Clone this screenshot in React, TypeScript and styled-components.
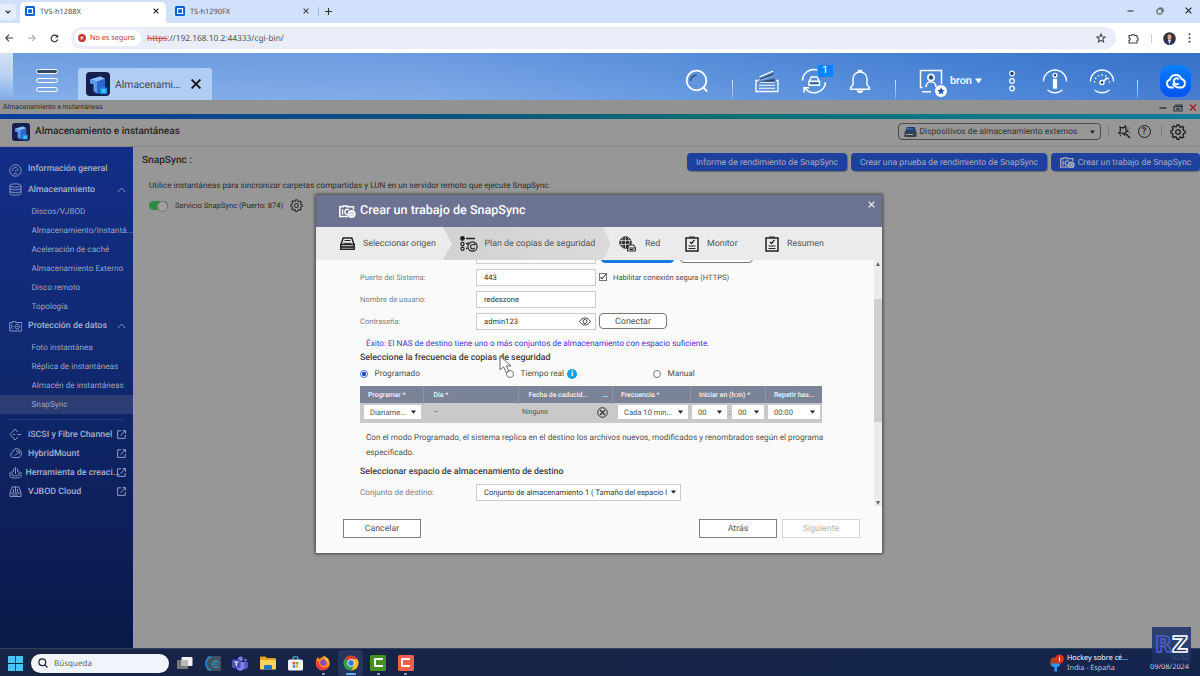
import React from "react";
import styled, { createGlobalStyle, css } from "styled-components";

const schedule = {
  paragraph:
    "Con el modo Programado, el sistema replica en el destino los archivos nuevos, modificados y renombrados según el programa",
};

const storageItems = [
  "Discos/VJBOD",
  "Almacenamiento/Instantá...",
  "Aceleración de caché",
  "Almacenamiento Externo",
  "Disco remoto",
  "Topología",
];

const protectionItems = [
  "Foto instantánea",
  "Réplica de instantáneas",
  "Almacén de instantáneas",
  "SnapSync",
];

export default function App() {
  return (
    <Screen>
      <GlobalStyle />
      <Browser />
      <Desktop />
      <StorageWindow />
      <Taskbar />
      <Watermark>
        <LetterR>R</LetterR>
        <LetterZ>Z</LetterZ>
      </Watermark>
    </Screen>
  );
}

const Browser = () => (
  <>
    <TabStrip>
      <TabSearch>
        <svg width="6" height="4" viewBox="0 0 6 4">
          <path d="M.7.7 3 3 5.3.7" fill="none" stroke="#222" strokeWidth="1.2" />
        </svg>
      </TabSearch>
      <BrowserTab $active>
        <Favicon />
        <TabTitle>TVS-h1288X</TabTitle>
        <Cross size={6} color="#222" />
      </BrowserTab>
      <BrowserTab>
        <Favicon />
        <TabTitle>TS-h1290FX</TabTitle>
        <Cross size={6} color="#444" />
      </BrowserTab>
      <TabDivider />
      <svg width="7" height="7" viewBox="0 0 7 7">
        <path d="M3.5 0v7M0 3.5h7" stroke="#333" strokeWidth="1.1" />
      </svg>
      <WindowButtons>
        <svg width="7" height="8" viewBox="0 0 7 8">
          <path d="M.5 4h6" stroke="#222" />
        </svg>
        <svg width="8" height="8" viewBox="0 0 8 8" fill="none" stroke="#333" strokeWidth=".9">
          <rect x="1" y="2" width="5" height="5" rx="1.2" />
          <path d="M3 1h2.5A1.7 1.7 0 0 1 7.200 2.700V5" />
        </svg>
        <Cross size={7} color="#222" />
      </WindowButtons>
    </TabStrip>
    <AddressRow>
      <NavButtons>
        <svg width="8" height="8" viewBox="0 0 8 8" fill="none" stroke="#444" strokeWidth="1.1">
          <path d="M8 4H1M4 .7.8 4 4 7.300" />
        </svg>
        <svg width="8" height="8" viewBox="0 0 8 8" fill="none" stroke="#999" strokeWidth="1">
          <path d="M0 4h7M4 .7 7.200 4 4 7.300" />
        </svg>
        <svg width="9" height="9" viewBox="0 0 9 9" fill="none" stroke="#333" strokeWidth="1.2">
          <path d="M7.600 5.500A3.300 3.300 0 1 1 7 2.300" />
          <path d="M8.200.4v3.200H5z" fill="#333" stroke="none" />
        </svg>
      </NavButtons>
      <Omnibox>
        <SecurityChip>
          <svg width="8" height="8" viewBox="0 0 8 8">
            <circle cx="4" cy="4" r="3.900" fill="#c5332c" />
            <path d="m2.600 2.600 2.800 2.800m0-2.800L2.600 5.400" stroke="#fff" strokeWidth="1.1" />
          </svg>
          No es seguro
        </SecurityChip>
        <Url>
          <s>https</s>://192.168.10.2:44333/cgi-bin/
        </Url>
        <svg width="10" height="10" viewBox="0 0 24 24" fill="none" stroke="#444" strokeWidth="2.500">
          <path d="m12 2.500 2.900 6.400 7 .7-5.200 4.700 1.500 6.900L12 17.600l-6.200 3.600 1.500-6.900L2.100 9.600l7-.7z" />
        </svg>
      </Omnibox>
      <BrowserActions>
        <svg width="11" height="11" viewBox="0 0 11 11" fill="none" stroke="#444" strokeWidth="1.1">
          <path d="M1 2.500h2.700a1.300 1.300 0 0 1 2.600 0H9v2.300a1.300 1.300 0 0 1 0 2.600V10H1V7.400a1.200 1.200 0 0 0 0-2.500z" />
        </svg>
        <ToolDivider />
        <svg width="13" height="13" viewBox="0 0 13 13">
          <circle cx="6.500" cy="6.500" r="6.300" fill="#3b3036" />
          <path d="M1 9.500C3 7 4.500 8 5 7.500l3 0c.5.5 3 0 4 2A6.300 6.300 0 0 1 1 9.500" fill="#26355c" />
          <path d="m5 7.500 1.500 5 1.500-5z" fill="#eef" />
          <ellipse cx="6.500" cy="5" rx="2" ry="2.700" fill="#d8a68c" />
        </svg>
        <svg width="3" height="10" viewBox="0 0 3 10" fill="#444">
          <circle cx="1.500" cy="1.300" r="1" />
          <circle cx="1.500" cy="5" r="1" />
          <circle cx="1.500" cy="8.700" r="1" />
        </svg>
      </BrowserActions>
    </AddressRow>
  </>
);

const Desktop = () => (
  <DesktopBar>
    <DesktopEdge />
    <MenuButton>
      <i />
      <i />
      <i />
    </MenuButton>
    <DesktopTab>
      <StorageLogo size={24} />
      <span>Almacenami…</span>
      <Cross size={10} color="#111" weight={1.900} />
    </DesktopTab>
    <DesktopTools>
      <Slot $w={44}>
        <svg width="24" height="24" viewBox="0 0 24 24" fill="none" stroke="#fff" strokeWidth="1.700">
          <circle cx="11.500" cy="11.500" r="9.800" />
          <path d="m18.500 18.800 3.800 3.800" strokeWidth="2" />
          <path d="M5.500 12a6 6 0 0 1 6-6" stroke="#26384f" strokeWidth="1.100" />
        </svg>
      </Slot>
      <Slot $w={26}><BarDivider /></Slot>
      <Slot $w={44}>
        <svg width="24" height="24" viewBox="0 0 24 24" fill="none" stroke="#fff" strokeWidth="1.300">
          <path d="M3.500 11.500H1v11h22v-11h-2" />
          <path d="m4.500 8 13.500-6M4.500 10.800 18.500 6M5 13.200h14.500" />
          <path d="m5 9.600 13.500-5.400v2L5 11zM5 12.300l14.500-2.600v3H5z" fill="#2c4668" stroke="none" />
          <path d="M4 16.200h16M4 19.300h16" strokeWidth="1.100" />
        </svg>
      </Slot>
      <Slot $w={49}>
        <Badged>
          <svg width="26" height="26" viewBox="0 0 26 26" fill="none" stroke="#fff" strokeWidth="1.500">
            <path d="M1.500 12.500A11.300 11.300 0 0 1 16 2M24.500 14A11.500 11.500 0 0 1 4 20.300M3 24.500v-4.800h5" />
            <path d="m8.500 13 1.700-4h6l1.700 4M8 13.200h10.500v4H8z" />
            <path d="M9 15.200h8" stroke="#26384f" strokeWidth=".8" />
          </svg>
          <CountBadge>1</CountBadge>
        </Badged>
      </Slot>
      <Slot $w={44}>
        <svg width="22" height="25" viewBox="0 0 22 25" fill="none" stroke="#fff" strokeWidth="1.400">
          <path d="M9.500 3.200V1.500h3v1.700M11 3C6.500 3 4 6.300 4 10v5.500L1.500 19v1.300h19V19L18 15.500V10c0-3.700-2.500-7-7-7z" />
          <path d="M8.500 22.200a3 3 0 0 0 5 0z" fill="#26384f" />
        </svg>
      </Slot>
      <Slot $w={26}><BarDivider /></Slot>
      <Slot $w={46}>
        <Badged>
          <svg width="24" height="24" viewBox="0 0 24 24" fill="none" stroke="#fff" strokeWidth="1.500">
            <path d="M22.500 15V1.500h-21v17h2M3 22.700h9M7 18.300c0-7.500 10-7.500 10 0" />
            <circle cx="12" cy="8.500" r="3.200" />
            <circle cx="12" cy="8.500" r="1.500" fill="#26384f" stroke="none" />
          </svg>
          <StarBadge>
            <svg width="8" height="8" viewBox="0 0 24 24" fill="#23539c">
              <path d="m12 1 3.200 7.400 8 .7-6 5.300 1.700 8L12 18l-6.900 4.400 1.700-8-6-5.300 8-.7z" />
            </svg>
          </StarBadge>
        </Badged>
      </Slot>
      <UserName>
        bron
        <svg width="7" height="6" viewBox="0 0 7 6"><path d="M0 .5h7L3.500 5.500z" fill="#fff" /></svg>
      </UserName>
      <Slot $w={24}>
        <svg width="8" height="22" viewBox="0 0 8 22" fill="none" stroke="#fff" strokeWidth="1.200">
          <circle cx="4" cy="3.500" r="2.300" fill="#26384f" />
          <circle cx="4" cy="11" r="2.300" />
          <circle cx="4" cy="18.500" r="2.300" />
        </svg>
      </Slot>
      <Slot $w={62}>
        <svg width="26" height="26" viewBox="0 0 26 26" fill="none" stroke="#fff" strokeWidth="1.400">
          <path d="M1.500 13.500a11.500 11.500 0 1 1 23 0M5.500 22a11.500 11.500 0 0 0 15 0" />
          <circle cx="13" cy="7.300" r="1.900" fill="#26384f" />
          <rect x="11.600" y="11.500" width="2.800" height="8.500" fill="#fff" />
        </svg>
      </Slot>
      <Slot $w={32}>
        <svg width="26" height="26" viewBox="0 0 26 26" fill="none" stroke="#fff" strokeWidth="1.400">
          <path d="M1.500 13.500a11.500 11.500 0 1 1 23 0M5.500 22a11.500 11.500 0 0 0 15 0" />
          <path d="M5.500 14.500a7.500 7.500 0 0 1 15 0" strokeDasharray="1.400 2.300" />
          <path d="m14.500 13 4-3.200" strokeWidth="1.800" />
          <circle cx="13" cy="14.500" r="2" fill="#26384f" />
        </svg>
      </Slot>
      <Slot $w={38}><BarDivider /></Slot>
      <Slot $w={39}>
        <CloudButton>
          <svg width="21" height="18" viewBox="0 0 21 18" fill="none" stroke="#fff" strokeWidth="1.900">
            <path d="M13.700 11.500a3 3 0 1 1 .3-4.200M7.600 11.500c1.600 2.500 3.600 4 6.400 4h1.800a4.300 4.300 0 0 0 .7-8.500 6 6 0 0 0-11.500.5 4.100 4.100 0 0 0 .5 8h3.200" />
          </svg>
        </CloudButton>
      </Slot>
    </DesktopTools>
  </DesktopBar>
);

const StorageWindow = () => (
  <AppWindow>
    <TitleBar>
      Almacenamiento e instantáneas
      <svg width="38" height="9" viewBox="0 0 38 9" fill="none">
        <path d="M.5 5h7" stroke="#2d3440" strokeWidth="1.500" />
        <path d="M16 2h7v6h-8V3" stroke="#2d3440" strokeWidth="1.200" />
        <path d="M15 3.500h8M17 6h4" stroke="#2d3440" strokeWidth="1.300" />
        <path d="m31 1.500 6 6m0-6-6 6" stroke="#a3202c" strokeWidth="1.500" />
      </svg>
    </TitleBar>
    <Stripe />
    <AppHeader>
      <StorageLogo size={18} />
      <AppName>Almacenamiento e instantáneas</AppName>
      <DeviceSelect>
        <svg width="13" height="12" viewBox="0 0 13 12">
          <path d="M3 1h8l1 5H1z" fill="#173f7c" />
          <path d="M3 3h6" stroke="#68a" />
          <path d="M.5 6h12v5H.5z" fill="#39424c" />
          <path d="M2 8.500h7" stroke="#9aa" />
        </svg>
        Dispositivos de almacenamiento externos
        <Caret />
      </DeviceSelect>
      <HeaderDivider />
      <svg width="14" height="14" viewBox="0 0 14 14" fill="none" stroke="#1c1c1c" strokeWidth="1.200">
        <path d="m3 2 3 1 2.500-2 .2 3.200L11 6 8.200 7.200 7.500 10 5.300 8 2 8.300l1.500-2.800z" />
        <path d="m8.500 8.500 4.500 4.500" strokeWidth="1.500" />
        <path d="M11 2.500v1M12.500 8h.8M3 11l.8-.8" />
      </svg>
      <HelpIcon>?</HelpIcon>
      <HeaderDivider $wide />
      <Gear size={16} color="#1c1c1c" />
    </AppHeader>
    <AppBody>
      <Sidebar>
        <MenuHead $solo>
          <Glyph name="gauge" />
          <span>Información general</span>
        </MenuHead>
        <MenuHead>
          <Glyph name="disks" />
          <span>Almacenamiento</span>
          <Chevron />
        </MenuHead>
        {storageItems.map((item) => (
          <MenuItem key={item}>{item}</MenuItem>
        ))}
        <MenuHead>
          <Glyph name="camera" />
          <span>Protección de datos</span>
          <Chevron />
        </MenuHead>
        {protectionItems.map((item) => (
          <MenuItem key={item} $active={item === "SnapSync"}>
            {item}
          </MenuItem>
        ))}
        <MenuRule />
        <MenuLink><Glyph name="iscsi" /><span>iSCSI y Fibre Channel</span><External /></MenuLink>
        <MenuLink><Glyph name="cloud" /><span>HybridMount</span><External /></MenuLink>
        <MenuLink $tight><Glyph name="tool" /><span>Herramienta de creaci...</span><External /></MenuLink>
        <MenuLink><Glyph name="vjbod" /><span>VJBOD Cloud</span><External /></MenuLink>
      </Sidebar>
      <Content>
        <ContentTop>
          <PageTitle>SnapSync :</PageTitle>
          <BlueButton $w={160}>Informe de rendimiento de SnapSync</BlueButton>
          <BlueButton $w={196}>Crear una prueba de rendimiento de SnapSync</BlueButton>
          <BlueButton $w={149}>
            <SnapGlyph width={15} color="#a5a9b5" />
            Crear un trabajo de SnapSync
          </BlueButton>
        </ContentTop>
        <Intro>
          Utilice instantáneas para sincronizar carpetas compartidas y LUN en un servidor remoto que ejecute SnapSync.
        </Intro>
        <ServiceRow>
          <Toggle />
          Servicio SnapSync (Puerto: 874)
          <Gear size={13} color="#2a2a2a" />
        </ServiceRow>
      </Content>
      <JobDialog />
    </AppBody>
  </AppWindow>
);

const JobDialog = () => (
  <Dialog>
    <DialogHeader>
      <SnapGlyph width={17} color="#fff" />
      <DialogTitle>Crear un trabajo de SnapSync</DialogTitle>
      <Cross size={7} color="#fff" />
    </DialogHeader>
    <Steps>
      <Step $w={127}>
        <svg width="15" height="13" viewBox="0 0 15 13" fill="none" stroke="#222" strokeWidth="1.500">
          <path d="M1 7.500 3.200 1h8.600L14 7.500M.8 7.500h13.400v4.700H.8z" />
          <path d="M3.500 6.300h8M4.500 3.500h6" strokeWidth="1" />
          <path d="M1 10h13" strokeWidth="1.700" />
        </svg>
        Seleccionar origen
      </Step>
      <Step $w={168} $active>
        <svg width="18" height="16" viewBox="0 0 18 16" fill="none" stroke="#222" strokeWidth="1.200">
          <circle cx="2.500" cy="2.500" r="1.800" fill="#222" />
          <circle cx="2.500" cy="8" r="1.600" />
          <circle cx="2.500" cy="12.800" r="1.600" />
          <path d="M6 2.500h9M6 7.500h3.500M6 12.500h1.500" strokeWidth="1.500" />
          <circle cx="12.500" cy="10.500" r="4.600" />
          <path d="M14.500 9.300a2.200 2.200 0 1 0 .2 2.500M16 7.800h-1.800" />
        </svg>
        Plan de copias de seguridad
      </Step>
      <Step $w={74}>
        <svg width="18" height="16" viewBox="0 0 18 16" fill="none" stroke="#222">
          <circle cx="6.500" cy="6.500" r="5.700" fill="#333" />
          <path d="M1 4.500h11M.8 8.500h10M6.500 1v11M4 1.500c-2 3-2 7 0 10M9 1.500c2 3 2 6 .5 10" stroke="#e4e4e4" strokeWidth=".7" />
          <path d="m8.500 12 1.500-3h5l1.500 3v3h-8z" fill="#e9e9e9" />
          <path d="M8.500 12h8M10.500 13.500h4" />
        </svg>
        Red
      </Step>
      <Step $w={80}><Clipboard />Monitor</Step>
      <Step $w={117}><Clipboard />Resumen</Step>
    </Steps>
    <DialogBody>
      <Form>
        <Field>
          <Label />
          <Input />
          <ClippedButton $primary />
          <ClippedButton />
        </Field>
        <Field>
          <Label>Puerto del Sistema:</Label>
          <Input>443</Input>
          <Checkbox>
            <svg width="8" height="8" viewBox="0 0 8 8">
              <path d="M1.500 4 3 6 7 1" fill="none" stroke="#222" strokeWidth="1" />
            </svg>
          </Checkbox>
          Habilitar conexión segura (HTTPS)
        </Field>
        <Field>
          <Label>Nombre de usuario:</Label>
          <Input>redeszone</Input>
        </Field>
        <Field>
          <Label>Contraseña:</Label>
          <Input>
            admin123
            <svg width="12" height="9" viewBox="0 0 12 9" fill="none" stroke="#444" strokeWidth="1">
              <path d="M.6 4.500C3-.2 9-.2 11.400 4.500 9 9.200 3 9.200.6 4.500z" />
              <circle cx="6" cy="4.500" r="2" />
            </svg>
          </Input>
          <ConnectButton>Conectar</ConnectButton>
        </Field>
        <Success>
          Éxito: El NAS de destino tiene uno o más conjuntos de almacenamiento con espacio suficiente.
        </Success>
        <SectionTitle>Seleccione la frecuencia de copias de seguridad</SectionTitle>
        <Radios>
          <Option $w={146}><Radio $on />Programado</Option>
          <Option $w={147}>
            <Radio />
            Tiempo real
            <InfoDot>i</InfoDot>
          </Option>
          <Option $w={90}><Radio />Manual</Option>
        </Radios>
        <ScheduleHead>
          <span>Programar *</span>
          <span>Día *</span>
          <span>
            Fecha de caducid...
            <b>...</b>
          </span>
          <span>Frecuencia *</span>
          <span>Iniciar en (h:m) *</span>
          <span>Repetir has...</span>
        </ScheduleHead>
        <ScheduleRow>
          <Select $w={57}>Diariame...<Caret /></Select>
          <Cell $w={88}>–</Cell>
          <Cell $w={75}>Ninguno</Cell>
          <svg width="11" height="11" viewBox="0 0 11 11" fill="none" stroke="#333">
            <circle cx="5.500" cy="5.500" r="4.800" />
            <path d="m3 3 5 5m0-5L3 8" strokeWidth="1.200" />
          </svg>
          <Select $w={70} $gap={10}>Cada 10 min...<Caret /></Select>
          <Select $w={35} $gap={4}>00<Caret /></Select>
          <Colon>:</Colon>
          <Select $w={32}>00<Caret /></Select>
          <Select $w={52} $gap={4}>00:00<Caret /></Select>
        </ScheduleRow>
        <Note>
          {schedule.paragraph}
          <br />
          especificado.
        </Note>
        <SectionTitle $target>Seleccionar espacio de almacenamiento de destino</SectionTitle>
        <Field $plain>
          <Label $big>Conjunto de destino:</Label>
          <PoolSelect>
            Conjunto de almacenamiento 1 ( Tamaño del espacio l
            <Caret />
          </PoolSelect>
        </Field>
      </Form>
      <ScrollTrack>
        <ScrollArrow $up />
        <ScrollThumb />
        <ScrollArrow />
      </ScrollTrack>
    </DialogBody>
    <DialogFooter>
      <FooterButton>Cancelar</FooterButton>
      <FooterButton $right>Atrás</FooterButton>
      <FooterButton $disabled>Siguiente</FooterButton>
    </DialogFooter>
    <Cursor width="14" height="19" viewBox="0 0 14 19">
      <path d="M1 1v14l3.600-3.200 2.600 5.700 2.600-1.200-2.500-5.400H12z" fill="#fff" stroke="#666" strokeWidth="1" />
    </Cursor>
  </Dialog>
);

const Taskbar = () => (
  <TaskbarRow>
    <svg width="15" height="15" viewBox="0 0 15 15" fill="#4cc2f4">
      <path d="M0 0h7.100v7.100H0zM7.900 0H15v7.100H7.900zM0 7.900h7.100V15H0zM7.900 7.900H15V15H7.900z" />
    </svg>
    <TaskSearch>
      <svg width="10" height="10" viewBox="0 0 10 10" fill="none" stroke="#222" strokeWidth="1.200">
        <circle cx="4.300" cy="4.300" r="3.400" />
        <path d="m6.800 6.800 2.700 2.700" />
      </svg>
      Búsqueda
    </TaskSearch>
    <TaskApps>
      <TaskApp>
        <svg width="16" height="14" viewBox="0 0 16 14">
          <rect x="0" y="4" width="11" height="9" rx="1" fill="#777" />
          <rect x="4.500" y="1" width="11" height="9" rx="1" fill="#f2f2f2" />
          <path d="M4.500 4H11v6H4.500z" fill="#bbb" />
        </svg>
      </TaskApp>
      <TaskApp>
        <svg width="16" height="15" viewBox="0 0 16 15" fill="none">
          <rect x="2" width="14" height="15" rx="1" fill="#44505f" />
          <path d="M6 .8C-.8 3 -.8 12 6 14.200" stroke="#2d8fd0" strokeWidth="1.500" />
          <path d="M14 9.500A3.500 3.500 0 1 1 14.200 7.500M12 8.500a1.500 1.500 0 1 1 0-2" stroke="#3d9fd0" strokeWidth="1" />
        </svg>
      </TaskApp>
      <TaskApp>
        <svg width="16" height="15" viewBox="0 0 16 15">
          <circle cx="8.500" cy="3" r="2.400" fill="#7b83eb" />
          <circle cx="13.500" cy="4" r="1.600" fill="#5b63c9" />
          <path d="M10 6h6v4.500a3 3 0 0 1-5 2z" fill="#5059c9" />
          <path d="M4 6h8.500v4.500a4.200 4.200 0 0 1-8.500 0z" fill="#7b83eb" />
          <rect y="3.500" width="8.500" height="8.500" rx="1" fill="#4a52bd" />
          <path d="M2.200 6h4.200M4.300 6v4" stroke="#fff" strokeWidth="1.100" />
        </svg>
      </TaskApp>
      <TaskApp>
        <svg width="16" height="14" viewBox="0 0 16 14">
          <path d="M0 1.500Q0 .5 1 .5h4.500L7 2h8q1 0 1 1v9.500H0z" fill="#e0a020" />
          <path d="M0 4h16v8.500q0 1-1 1H1q-1 0-1-1z" fill="#ffd257" />
          <path d="M4 13.500V10q0-1 1-1h6q1 0 1 1v3.500z" fill="#1d74c9" />
        </svg>
      </TaskApp>
      <TaskApp>
        <svg width="15" height="15" viewBox="0 0 15 15">
          <path d="M5 4V2q0-1.200 1.200-1.200h2.600Q10 .8 10 2v2" fill="none" stroke="#4db4e8" strokeWidth="1.200" />
          <rect y="3.500" width="15" height="11" rx="1.500" fill="#f0f4f8" />
          <path d="M4.700 6h2.500v2.500H4.700z" fill="#e8532b" />
          <path d="M7.800 6h2.500v2.500H7.800z" fill="#7bb526" />
          <path d="M4.700 9.200h2.500v2.500H4.700z" fill="#1c95e0" />
          <path d="M7.800 9.200h2.500v2.500H7.800z" fill="#f6b51d" />
        </svg>
      </TaskApp>
      <TaskApp $running>
        <svg width="16" height="16" viewBox="0 0 16 16">
          <path d="M1.500 4 3 2l1 2 2.500-1.500L9.500.5l1 2.500L13 3l1.800 4.500A7 7 0 1 1 1 7z" fill="#ff8a1f" />
          <path d="M1.300 8a6.800 6.800 0 0 0 12.700 3.500C10 14 4 13 3.500 7L2 5z" fill="#ef3051" />
          <circle cx="8.300" cy="7.600" r="3.100" fill="#8b46cf" />
          <path d="m10 1 3 4 1 4c-1-2-3-3-4-5z" fill="#ffcf3d" />
        </svg>
      </TaskApp>
      <TaskApp $running $focused>
        <svg width="16" height="16" viewBox="0 0 16 16">
          <path d="M8 8 1.500 4.200A7.500 7.500 0 0 1 14.500 4.200z" fill="#e33b2e" />
          <path d="M8 8 1.500 4.200A7.500 7.500 0 0 0 8 15.500l3.300-5.600z" fill="#2fa24f" />
          <path d="M8 8V4.200h6.500A7.500 7.500 0 0 1 8 15.500l3.300-5.600z" fill="#fbc116" />
          <circle cx="8" cy="8" r="3.700" fill="#fff" />
          <circle cx="8" cy="8" r="2.900" fill="#3b78e0" />
        </svg>
      </TaskApp>
      <TaskApp $running><CamtasiaIcon $color="#449022"><i /></CamtasiaIcon></TaskApp>
      <TaskApp $running><CamtasiaIcon $color="#f0604a"><i /></CamtasiaIcon></TaskApp>
    </TaskApps>
    <News>
      <svg width="14" height="18" viewBox="0 0 14 18">
        <circle cx="5" cy="8" r="4.800" fill="#b5401f" />
        <path d="M0 9.500h11L8.500 13H7v4.500H4.300V13H2.500z" fill="#2f95e8" />
        <circle cx="9.500" cy="5" r="4.500" fill="#d6361f" />
        <path d="M9.500 2.800v4.500" stroke="#fff" strokeWidth="1" />
      </svg>
      <div>
        <strong>Hockey sobre cé...</strong>
        <span>India - España</span>
      </div>
    </News>
    <Clock>
      <em>10:32</em>
      <span>09/08/2024</span>
    </Clock>
  </TaskbarRow>
);

type MarkProps = { size: number; color: string; weight?: number };

const Cross = ({ size, color, weight = 1.1 }: MarkProps) => (
  <svg width={size} height={size} viewBox={`0 0 ${size} ${size}`}>
    <path
      d={`M.6.6 ${size - 0.6} ${size - 0.6}M${size - 0.6}.6.6 ${size - 0.6}`}
      stroke={color}
      strokeWidth={weight}
    />
  </svg>
);

const Favicon = () => (
  <svg width="10" height="10" viewBox="0 0 10 10">
    <rect width="10" height="10" rx="1.500" fill="#0a5fd8" />
    <path d="M7.300 7.500H2.600V2.600h4.900v4.600M7 6l1 2" fill="none" stroke="#fff" strokeWidth="1.200" />
  </svg>
);

const StorageLogo = ({ size }: { size: number }) => (
  <svg width={size} height={size} viewBox="0 0 24 24">
    <rect width="24" height="24" rx="4" fill="#16204f" />
    <path d="M4 7.500 14 4.500l5 2v13l-8 2.500-3-2v-8H4z" fill="#2c68cf" />
    <path d="M4 7.500 14 4.500l5 2-8 3z" fill="#8fc0f5" />
    <path d="m4 7.500 7 2V21l-3.500-2v-7L4 11z" fill="#5d9cec" />
    <path d="M14 15.500h7v6.500h-7z" fill="#1c8fe0" />
    <path d="M15.500 17.200h4v3.300h-4z" fill="#46c8f4" />
  </svg>
);

const Gear = ({ size, color }: MarkProps) => (
  <svg width={size} height={size} viewBox="0 0 24 24" fill="none" stroke={color} strokeWidth="1.900">
    <path d="m9.700 4 .8-2.500h3L14.300 4l2 .8 2.300-1.200 2 2-1.200 2.300.8 2 2.500.8v3l-2.500.8-.8 2 1.200 2.300-2 2-2.300-1.200-2 .8-.8 2.500h-3L9.700 20l-2-.8-2.300 1.200-2-2 1.200-2.300-.8-2-2.500-.8v-3L3.800 9.500l.8-2-1.200-2.300 2-2 2.300 1.200z" />
    <circle cx="12" cy="12" r="3.500" />
  </svg>
);

const SnapGlyph = ({ width, color }: { width: number; color: string }) => (
  <svg width={width} height={(width * 13) / 17} viewBox="0 0 17 13" fill="none" stroke={color} strokeWidth="1.500">
    <path d="M9 11.500H.8V1.800H4V.9h4v.9h6.500v3M3.500 4.200v5.300" />
    <path d="M10 5a2.500 2.500 0 1 0-1 4.300" />
    <circle cx="12.700" cy="9" r="3.200" fill={color} fillOpacity=".6" />
    <path d="M11.500 6.500h2.300M11 9.500h3.300" />
  </svg>
);

const Clipboard = () => (
  <svg width="14" height="16" viewBox="0 0 14 16" fill="none" stroke="#222">
    <path d="M1 2h12v13H1z" strokeWidth="1.500" />
    <path d="M4 1h6M3.500 10h7M3.500 12.500h7" strokeWidth="1.100" />
    <path d="m5 6 1.500 1.500 3-3.500" strokeWidth="1.200" />
  </svg>
);

const Chevron = () => (
  <svg width="9" height="6" viewBox="0 0 9 6">
    <path d="m.7 5.200 3.800-4.200 3.800 4.200" fill="none" stroke="#8492be" />
  </svg>
);

const External = () => (
  <svg width="9" height="9" viewBox="0 0 9 9" fill="none" stroke="#8f9cc4">
    <path d="M4 .8H.6v7.600h7.600V5M5.500.6h3v3M8.200.9 3.500 5.700" />
  </svg>
);

const glyphs: Record<string, string> = {
  gauge:
    "M6.500.8a5.700 5.700 0 1 1 0 11.400A5.700 5.700 0 0 1 6.500.8M3.200 7a3.300 3.300 0 0 1 4.500-3.300M5.800 7.800 9.300 4.500M4.500 9.700h4M9.700 6.300V7",
  disks:
    "M1 2.500C1 .3 12 .3 12 2.500S1 4.700 1 2.500v8c0 2.200 11 2.200 11 0v-8M1 5.200c0 2.200 11 2.200 11 0M1 8c0 2.200 11 2.200 11 0",
  camera: "M.7 2.500h3V1.500h3v1h6v8.500H.7zM2.800 4.500v4.500M8.300 4.400a2.300 2.300 0 1 1-.1 0M7.500 6.700h2",
  iscsi: "M9 4 6 1 1 6.500 6 12l3-3M4 6.500h2M8.500 6.500H12",
  cloud: "M3.500 10.500a3 3 0 0 1 0-5.500 4.500 4.500 0 0 1 8-1.500c2 3 .5 7-2.500 7zM6 8.500l4-4M7 4h3.200v3",
  tool: "M1 6v4.500c0 2 11 2 11 0V6M3 5v4c0 1 7 1 7 0V5M6.500 1v7M4.500 2.500v3M8.500 2.500v3",
  vjbod: "M1 7.500 3 2h7l2 5.500v4H1zM1 8h11M4.500 4v3M8.500 4v3M6.500 1v6M3 10h6",
};

const Glyph = ({ name }: { name: string }) => (
  <svg width="13" height="13" viewBox="0 0 13 13" fill="none" stroke="#8d9ac4" strokeWidth=".95">
    <path d={glyphs[name]} />
  </svg>
);

const Caret = () => (
  <svg width="5" height="4" viewBox="0 0 5 4">
    <path d="M0 .5h5L2.500 3.800z" fill="#222" />
  </svg>
);

const GlobalStyle = createGlobalStyle`
  * { box-sizing: border-box; }
  body { margin: 0; overflow: hidden; text-rendering: geometricPrecision; }
  svg { display: block; flex: none; }
`;

const row = css`
  display: flex;
  align-items: center;
  white-space: nowrap;
`;

const systemFont = css`
  font-family: "Noto Sans", sans-serif;
`;

const Screen = styled.div`
  position: relative;
  display: flex;
  flex-direction: column;
  width: 1200px;
  height: 676px;
  overflow: hidden;
  font-family: Roboto, sans-serif;
`;

const TabStrip = styled.div`
  ${row}
  ${systemFont}
  height: 23px;
  background: #d2e1fb;
`;

const TabSearch = styled.div`
  ${row}
  justify-content: center;
  width: 16px;
  height: 16px;
  margin-right: 4px;
  border-radius: 0 5px 5px 0;
  background: #e6eefc;
`;

const BrowserTab = styled.div<{ $active?: boolean }>`
  ${row}
  align-self: flex-end;
  width: ${(p) => (p.$active ? 146 : 150)}px;
  height: 21px;
  padding: 0 7px 3px ${(p) => (p.$active ? 5 : 9)}px;
  border-radius: 5px 5px 0 0;
  background: ${(p) => (p.$active ? "#fff" : "transparent")};
`;

const TabTitle = styled.span`
  flex: 1;
  margin-left: 5px;
  padding-top: 1px;
  color: #4c5058;
  font-size: 7.4px;
`;

const TabDivider = styled.div`
  width: 1px;
  height: 9px;
  margin: 0 6px 0 2px;
  background: #a9bbdd;
`;

const WindowButtons = styled.div`
  ${row}
  gap: 21.5px;
  margin-left: auto;
  padding: 0 8px 2px 0;
`;

const AddressRow = styled.div`
  ${row}
  ${systemFont}
  height: 30px;
  background: #fff;
`;

const NavButtons = styled.div`
  ${row}
  gap: 14.5px;
  width: 71px;
  padding-left: 5px;
`;

const Omnibox = styled.div`
  ${row}
  width: 1045px;
  height: 22px;
  padding: 0 10px 0 3px;
  border-radius: 11px;
  background: #e9edf8;
`;

const SecurityChip = styled.div`
  ${row}
  gap: 4px;
  width: 67px;
  height: 16px;
  padding-left: 4px;
  border-radius: 8px;
  background: #fff;
  color: #b3382f;
  font-size: 7.25px;
`;

const Url = styled.div`
  flex: 1;
  margin-left: 6px;
  color: #4d5157;
  font-size: 8.34px;

  s {
    color: #cf4b41;
  }
`;

const BrowserActions = styled.div`
  ${row}
  flex: 1;
  justify-content: space-between;
  padding: 0 9px 0 12px;
`;

const ToolDivider = styled.div`
  width: 1px;
  height: 9px;
  background: #c4d0e8;
`;

const DesktopBar = styled.div`
  display: flex;
  align-items: flex-end;
  height: 47px;
  background: linear-gradient(180deg, rgba(20, 70, 160, 0.12), rgba(255, 255, 255, 0.06)),
    linear-gradient(90deg, #7baae8 0%, #78a6e8 35%, #5c93de 60%, #4581d6 85%, #3b77cd 100%);
`;

const DesktopEdge = styled.div`
  width: 13px;
  height: 47px;
  background: linear-gradient(190deg, #d3e2f7 0%, #bcd3f4 45%, #7ea9e7 100%);
`;

const MenuButton = styled.div`
  display: flex;
  flex-direction: column;
  gap: 4px;
  width: 65px;
  padding: 0 0 8px 23px;

  i {
    width: 22px;
    height: 5px;
    border: 1.3px solid #fff;
    border-radius: 3px;
  }

  i:first-child {
    background: #2f4866;
  }
`;

const DesktopTab = styled.div`
  ${row}
  width: 134px;
  height: 32px;
  padding: 0 11px 0 8px;
  border-radius: 3px 3px 0 0;
  background: #b2cdf3;
  color: #3a4657;
  font-size: 10.4px;

  span {
    flex: 1;
    margin-left: 5px;
  }
`;

const DesktopTools = styled.div`
  ${row}
  height: 38px;
  margin-left: auto;
  padding-right: 5px;
`;

const Slot = styled.div<{ $w: number }>`
  ${row}
  justify-content: center;
  width: ${(p) => p.$w}px;
  height: 38px;
`;

const BarDivider = styled.div`
  align-self: flex-end;
  width: 1px;
  height: 19px;
  margin-bottom: 1px;
  background: linear-gradient(#d5e4fa, rgba(213, 228, 250, 0.3));
`;

const Badged = styled.div`
  position: relative;
`;

const CountBadge = styled.div`
  position: absolute;
  top: -3px;
  left: 17px;
  width: 15px;
  height: 12px;
  background: #0a84ff;
  color: #fff;
  font-size: 10px;
  line-height: 12.5px;
  text-align: center;
`;

const StarBadge = styled.div`
  ${row}
  position: absolute;
  left: 16px;
  top: 16px;
  justify-content: center;
  width: 12px;
  height: 12px;
  border-radius: 50%;
  background: #fff;
`;

const UserName = styled.div`
  ${row}
  gap: 3px;
  width: 50px;
  margin-left: -4px;
  padding-bottom: 1px;
  color: #fff;
  font-size: 10.8px;
  font-weight: 500;
`;

const CloudButton = styled.div`
  ${row}
  justify-content: center;
  width: 31px;
  height: 32px;
  border-radius: 11px;
  background: linear-gradient(#0a80ff, #0552f0);
`;

const AppWindow = styled.div`
  display: flex;
  flex-direction: column;
  height: 548px;
  background: #979797;
`;

const TitleBar = styled.div`
  ${row}
  justify-content: space-between;
  height: 14px;
  padding: 0 3px;
  background: #929292;
  color: #2a2a2a;
  font-size: 6.98px;
`;

const Stripe = styled.div`
  height: 5px;
  background: linear-gradient(90deg, #0c3c9c 0%, #0a5180 35%, #0b6f72 60%, #0a7c9a 100%);
`;

const AppHeader = styled.div`
  ${row}
  height: 28px;
  padding: 0 14px 2px 12px;
  border-bottom: 1px solid #858585;
`;

const AppName = styled.div`
  flex: 1;
  margin-left: 5px;
  color: #262626;
  font-size: 10.07px;
  font-weight: 500;
`;

const DeviceSelect = styled.div`
  ${row}
  gap: 3px;
  width: 203px;
  height: 17px;
  padding: 0 5px;
  border: 1px solid #4a4a4a;
  border-radius: 4px;
  color: #333;
  font-size: 8.5px;

  svg:last-child {
    margin-left: auto;
  }
`;

const HeaderDivider = styled.div<{ $wide?: boolean }>`
  width: 1px;
  height: 11px;
  margin: 0 8.5px 0 ${(p) => (p.$wide ? 10 : 7)}px;
  background: #7c7c7c;
`;

const HelpIcon = styled.div`
  ${row}
  justify-content: center;
  width: 13px;
  height: 13px;
  margin-left: 6.5px;
  border: 1.2px solid #1c1c1c;
  border-radius: 50%;
  color: #1c1c1c;
  font-size: 9.5px;
  font-weight: 500;
`;

const AppBody = styled.div`
  position: relative;
  display: flex;
  height: 501px;
`;

const Sidebar = styled.div`
  width: 133px;
  padding-top: 11px;
  background: linear-gradient(#122e87 0%, #10286f 45%, #0c1b4f 90%, #0b1947 100%);
`;

const menuRow = css`
  ${row}
  padding-left: 9px;
  color: #a9b1c9;
  font-size: 8.83px;
  font-weight: 500;

  span {
    flex: 1;
    margin-left: 6px;
  }

  span + svg {
    margin-right: 7px;
  }
`;

const MenuHead = styled.div<{ $solo?: boolean }>`
  ${menuRow}
  height: 21px;
  margin-bottom: ${(p) => (p.$solo ? 0 : 1.5)}px;

  svg:first-child {
    margin-top: ${(p) => (p.$solo ? 4 : 0)}px;
  }
`;

const MenuItem = styled.div<{ $active?: boolean }>`
  height: 19px;
  padding-left: 31.5px;
  overflow: hidden;
  background: ${(p) => (p.$active ? "#2d3c72" : "transparent")};
  color: #9ba5c3;
  font-size: 8.2px;
  line-height: 20px;
  white-space: nowrap;
`;

const MenuRule = styled.div`
  height: 1px;
  margin: 5px 9px;
  background: #283b77;
`;

const MenuLink = styled.div<{ $tight?: boolean }>`
  ${menuRow}
  height: 19px;

  span {
    margin-left: ${(p) => (p.$tight ? 3.5 : 6)}px;
    margin-right: ${(p) => (p.$tight ? -4 : 0)}px;
  }
`;

const Content = styled.div`
  flex: 1;
`;

const ContentTop = styled.div`
  ${row}
  gap: 4px;
  height: 26px;
  padding: 6px 0 2px;
`;

const PageTitle = styled.div`
  flex: 1;
  padding: 0 0 4px 9px;
  color: #262626;
  font-size: 10.1px;
  font-weight: 500;
`;

const BlueButton = styled.div<{ $w: number }>`
  ${row}
  justify-content: center;
  gap: 3px;
  width: ${(p) => p.$w}px;
  height: 18px;
  padding-top: 1px;
  border-radius: 4px;
  background: #1f419e;
  box-shadow: 1px 1px 1px rgba(0, 0, 0, 0.3);
  color: #a5abc0;
  font-size: 8.7px;
`;

const Intro = styled.div`
  padding: 7px 0 0 16px;
  color: #2b2b2b;
  font-size: 8.16px;
  line-height: 11px;
  white-space: nowrap;
`;

const ServiceRow = styled.div`
  ${row}
  gap: 7px;
  height: 14px;
  margin-top: 7px;
  padding-left: 16px;
  color: #2b2b2b;
  font-size: 7.6px;
`;

const Toggle = styled.div`
  display: flex;
  justify-content: flex-end;
  width: 19px;
  height: 9px;
  border-radius: 5px;
  background: #2f8a42;

  &::after {
    content: "";
    width: 9px;
    height: 9px;
    border: 1px solid #777;
    border-radius: 50%;
    background: #a0a0a0;
  }
`;

const Dialog = styled.div`
  position: absolute;
  top: 48px;
  left: 316px;
  width: 566px;
  height: 358px;
  background: #fafafa;
  box-shadow: 0 0 3px 1px rgba(0, 0, 0, 0.55);
  color: #4f4f4f;
`;

const DialogHeader = styled.div`
  ${row}
  height: 32px;
  padding: 0 7px 0 23px;
  background: #6b7292;

  svg:last-child {
    align-self: flex-start;
    margin-top: 6px;
  }
`;

const DialogTitle = styled.div`
  flex: 1;
  margin-left: 4px;
  padding-bottom: 1px;
  color: #fff;
  font-size: 12.55px;
  font-weight: 500;
`;

const Steps = styled.div`
  display: flex;
  height: 33px;
  background: #ebebeb;
`;

const Step = styled.div<{ $w: number; $active?: boolean }>`
  ${row}
  gap: ${(p) => (p.$active ? 6.5 : 8)}px;
  width: ${(p) => p.$w}px;
  padding-left: ${(p) => (p.$active ? 17 : 0)}px;
  background: ${(p) => (p.$active ? "linear-gradient(90deg, #d2d2d2, #dadada)" : "transparent")};
  clip-path: ${(p) => (p.$active ? "polygon(0 0, 160px 0, 100% 50%, 160px 100%, 0 100%, 9px 50%)" : "none")};
  color: #555;
  font-size: 8.85px;

  &:first-child {
    padding-left: 24px;
  }

  &:nth-child(3) {
    padding-left: 8px;
  }
`;

const DialogBody = styled.div`
  display: flex;
  height: 246px;
  overflow: hidden;
`;

const Form = styled.div`
  width: 558px;
  margin-top: -16px;
  padding-left: 44px;
`;

const Field = styled.div<{ $plain?: boolean }>`
  ${row}
  height: 22px;
  margin-top: ${(p) => (p.$plain ? 2 : 0)}px;
  font-size: 7.55px;
`;

const Label = styled.div<{ $big?: boolean }>`
  width: 116px;
  color: #7f7f7f;
  font-size: ${(p) => (p.$big ? 8.1 : 7.55)}px;
`;

const Input = styled.div`
  ${row}
  justify-content: space-between;
  width: 120px;
  height: 17px;
  padding: 0 4px 0 7px;
  border: 1px solid #ccc;
  background: #fff;
  color: #333;
  font-size: 7.6px;
`;

const ClippedButton = styled.div<{ $primary?: boolean }>`
  width: 73px;
  height: 15px;
  margin-left: ${(p) => (p.$primary ? 5 : 5.5)}px;
  border: 1px solid ${(p) => (p.$primary ? "#1478e0" : "#777")};
  border-radius: 4px;
  background: ${(p) => (p.$primary ? "#1478e0" : "#fff")};
`;

const Checkbox = styled.div`
  ${row}
  justify-content: center;
  width: 8px;
  height: 8px;
  margin: 0 6px 0 3px;
  border: 1px solid #777;
`;

const ConnectButton = styled.div`
  ${row}
  justify-content: center;
  width: 68px;
  height: 16px;
  margin-left: 3px;
  padding-top: 1px;
  border: 1px solid #777;
  border-radius: 4px;
  background: #fff;
  font-size: 8.9px;
`;

const Success = styled.div`
  height: 19px;
  padding-left: 6px;
  color: #3d38d6;
  font-size: 8.17px;
  line-height: 22px;
  white-space: nowrap;
`;

const SectionTitle = styled.div<{ $target?: boolean }>`
  height: 14px;
  margin-top: ${(p) => (p.$target ? 5 : 0)}px;
  color: #3c3c3c;
  font-size: 8.87px;
  font-weight: 500;
  line-height: 15px;
  white-space: nowrap;
`;

const Radios = styled.div`
  ${row}
  height: 17px;
`;

const Option = styled.div<{ $w: number }>`
  ${row}
  width: ${(p) => p.$w}px;
  font-size: 8.25px;
`;

const Radio = styled.div<{ $on?: boolean }>`
  width: 8px;
  height: 8px;
  margin: 1px 6.5px 0 0;
  border: 1px solid ${(p) => (p.$on ? "#4a6fd0" : "#777")};
  border-radius: 50%;
  background: ${(p) => (p.$on ? "radial-gradient(#1f4fc4 45%, #fff 60%)" : "#fff")};
`;

const InfoDot = styled.div`
  width: 10px;
  height: 10px;
  margin-left: 3px;
  border-radius: 50%;
  background: #0ba1ec;
  color: #fff;
  font-size: 8px;
  font-weight: 700;
  line-height: 10px;
  text-align: center;
`;

const ScheduleHead = styled.div`
  display: grid;
  grid-template-columns: 64px 95px 94px 78px 75px 56px;
  width: 462px;
  height: 17px;
  margin-top: 4px;
  background: #7b8497;
  color: #f2f3f6;
  font-size: 6.9px;
  font-weight: 500;
  line-height: 18px;
  white-space: nowrap;

  span {
    display: flex;
    justify-content: space-between;
    padding: 0 4px 0 8px;
    border-right: 1px solid #8c94a5;
  }

  span:nth-child(2),
  span:nth-child(3) {
    padding-left: 9.5px;
  }

  span:last-child {
    border-right: 0;
  }
`;

const ScheduleRow = styled.div`
  ${row}
  width: 462px;
  height: 20px;
  padding: 0 0 2px 4px;
  background: #c9c9c9;
`;

const Select = styled.div<{ $w: number; $gap?: number }>`
  ${row}
  justify-content: space-between;
  width: ${(p) => p.$w}px;
  height: 14.5px;
  margin-left: ${(p) => p.$gap || 0}px;
  padding: 0 5px 0 6px;
  background: #fff;
  font-size: 7.6px;
`;

const Cell = styled.div<{ $w: number }>`
  width: ${(p) => p.$w}px;
  font-size: 6.95px;

  ${Select} + & {
    margin-left: 13px;
  }
`;

const Colon = styled.div`
  width: 5px;
  font-size: 8px;
  text-align: center;
`;

const Note = styled.div`
  height: 30px;
  margin-top: 7px;
  padding-left: 6px;
  font-size: 8.18px;
  line-height: 15px;
  white-space: nowrap;
`;

const PoolSelect = styled(Input)`
  width: 205px;
`;

const ScrollTrack = styled.div`
  display: flex;
  flex-direction: column;
  align-items: center;
  width: 8px;
  padding: 2px 0 1px;
  background: #ececec;
`;

const ScrollArrow = styled.div<{ $up?: boolean }>`
  width: 0;
  height: 0;
  margin: ${(p) => (p.$up ? "0" : "auto 0 0")};
  border: 2.5px solid transparent;
  border-bottom: ${(p) => (p.$up ? "4px solid #666" : "0")};
  border-top: ${(p) => (p.$up ? "0" : "4px solid #666")};
`;

const ScrollThumb = styled.div`
  width: 8px;
  height: 123px;
  margin-top: 33px;
  background: #cfcfcf;
`;

const DialogFooter = styled.div`
  display: flex;
  padding: 13px 22px 0 27px;
`;

const FooterButton = styled.div<{ $right?: boolean; $disabled?: boolean }>`
  width: 78px;
  height: 19px;
  margin-left: ${(p) => (p.$right ? "auto" : p.$disabled ? "5px" : "0")};
  border: 1px solid ${(p) => (p.$disabled ? "#d8d8d8" : "#808080")};
  background: #fff;
  color: ${(p) => (p.$disabled ? "#b5b5b5" : "#555")};
  font-size: 8.8px;
  line-height: 18px;
  text-align: center;
`;

const Cursor = styled.svg`
  position: absolute;
  left: 183px;
  top: 160px;
`;

const TaskbarRow = styled.div`
  ${row}
  ${systemFont}
  height: 28px;
  padding: 1px 11px 0 8px;
  border-top: 1px solid #31405f;
  background: linear-gradient(90deg, #182444, #14244c);
`;

const TaskSearch = styled.div`
  ${row}
  gap: 6px;
  width: 138px;
  height: 19px;
  margin-left: 8px;
  padding-left: 7px;
  border-radius: 10px;
  background: #f1f4fb;
  color: #666a72;
  font-size: 8.05px;
`;

const TaskApps = styled.div`
  display: flex;
  margin-left: 3.3px;
`;

const TaskApp = styled.div<{ $running?: boolean; $focused?: boolean }>`
  display: flex;
  flex-direction: column;
  align-items: center;
  justify-content: center;
  width: 25.5px;
  height: 26px;
  margin-right: 2.1px;
  padding-top: ${(p) => (p.$running ? 3 : 0)}px;
  border-radius: 3px;
  background: ${(p) => (p.$focused ? "#24365d" : "transparent")};

  &::after {
    content: "";
    display: ${(p) => (p.$running ? "block" : "none")};
    width: ${(p) => (p.$focused ? 10 : 3)}px;
    height: 1.5px;
    margin-top: 2.5px;
    border-radius: 1px;
    background: ${(p) => (p.$focused ? "#59b8f2" : "#9aa5b8")};
  }
`;

const CamtasiaIcon = styled.div<{ $color: string }>`
  display: flex;
  align-items: center;
  justify-content: center;
  width: 16px;
  height: 16px;
  border-radius: 1.5px;
  background: ${(p) => p.$color};

  i {
    width: 9px;
    height: 9px;
    border: 2px solid #fff;
    border-right: 0;
    border-radius: 2px 0 0 2px;
  }
`;

const News = styled.div`
  ${row}
  gap: 3px;
  margin-left: auto;
  color: #fff;
  font-size: 7.24px;
  line-height: 10px;

  strong,
  span {
    display: block;
    font-weight: 400;
  }

  span {
    color: #c0c6d4;
  }
`;

const Clock = styled.div`
  display: flex;
  flex-direction: column;
  align-items: flex-end;
  width: 61px;
  color: #d9dde6;
  font-size: 7.33px;
  line-height: 9px;

  em {
    color: #7f8fb5;
    font-style: normal;
  }
`;

const Watermark = styled.div`
  position: absolute;
  left: 1152px;
  top: 627px;
  display: flex;
  justify-content: center;
  width: 39px;
  height: 38px;
  padding-top: 11px;
  background: linear-gradient(rgba(34, 54, 104, 0.9) 55%, rgba(28, 46, 94, 0.5) 100%);
  color: transparent;
  font: 700 22px/16px "DejaVu Sans", sans-serif;
`;

const LetterR = styled.span`
  height: 16px;
  -webkit-text-stroke: 1.3px #5a5fd8;
`;

const LetterZ = styled.span`
  height: 16px;
  -webkit-text-stroke: 1.6px #fff;
`;
